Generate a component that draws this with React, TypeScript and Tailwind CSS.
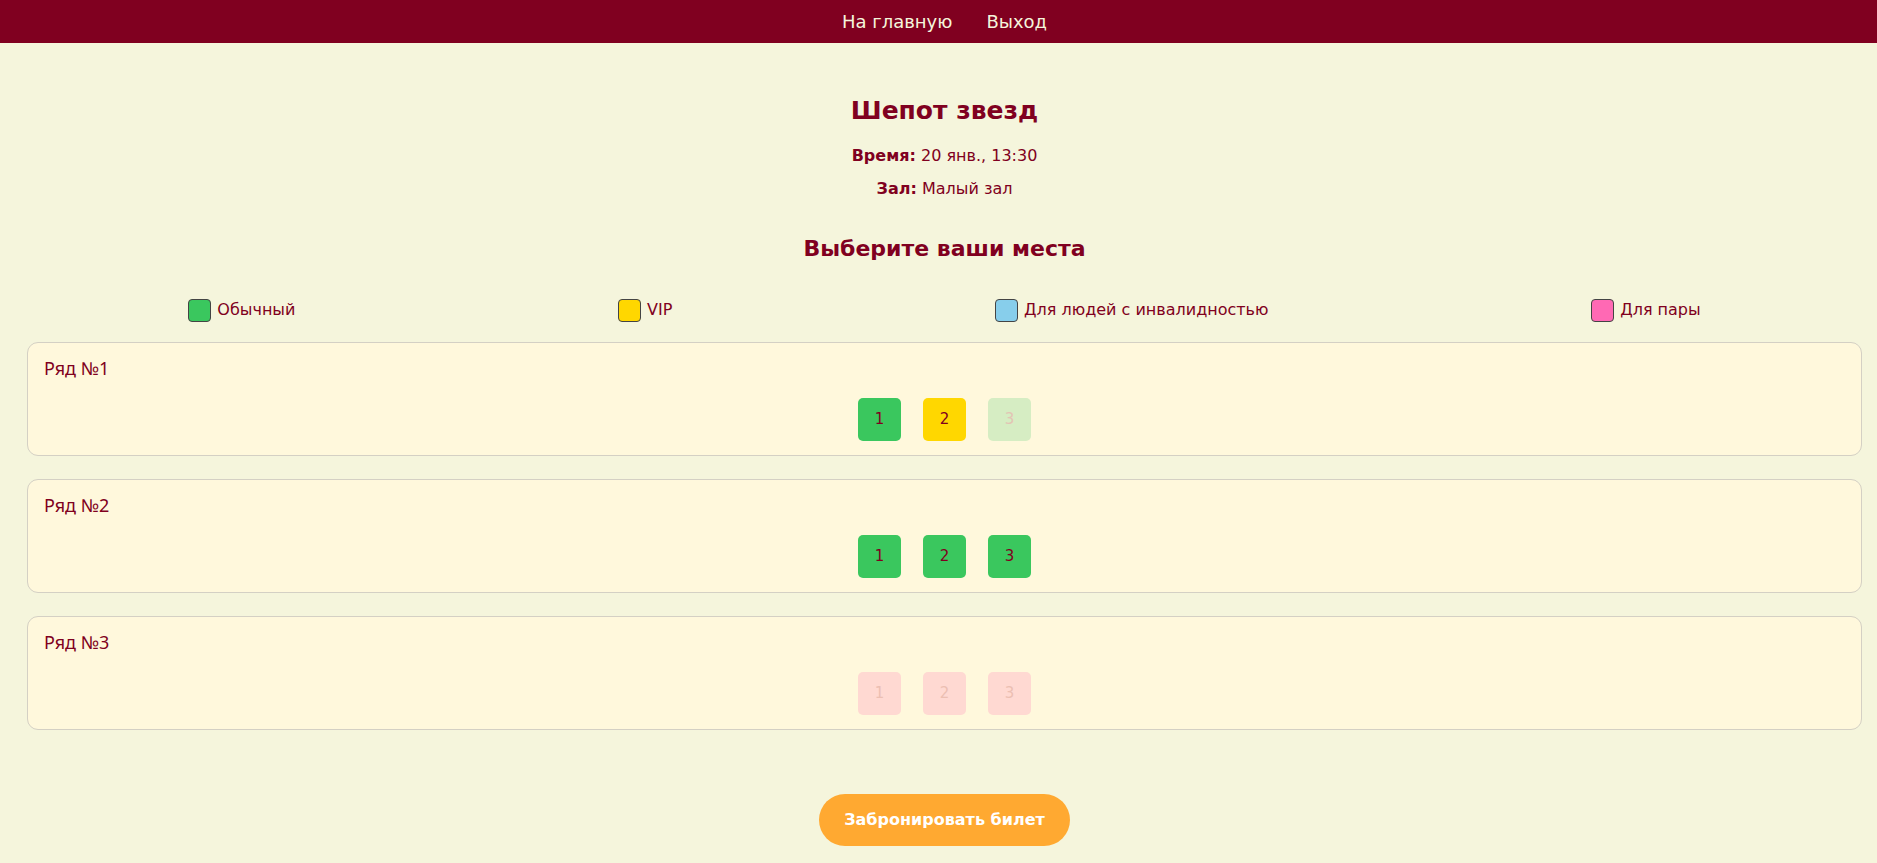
import React from "react";

const legend = [
  { label: "Обычный", color: "bg-[#3ac75e]" },
  { label: "VIP", color: "bg-[#ffd700]" },
  { label: "Для людей с инвалидностью", color: "bg-[#87ceeb]" },
  { label: "Для пары", color: "bg-[#ff69b4]" },
];

type Seat = { n: number; kind: "green" | "vip" | "taken-green" | "taken" };

const rows: { title: string; seats: Seat[] }[] = [
  {
    title: "Ряд №1",
    seats: [
      { n: 1, kind: "green" },
      { n: 2, kind: "vip" },
      { n: 3, kind: "taken-green" },
    ],
  },
  {
    title: "Ряд №2",
    seats: [
      { n: 1, kind: "green" },
      { n: 2, kind: "green" },
      { n: 3, kind: "green" },
    ],
  },
  {
    title: "Ряд №3",
    seats: [
      { n: 1, kind: "taken" },
      { n: 2, kind: "taken" },
      { n: 3, kind: "taken" },
    ],
  },
];

const seatClass: Record<Seat["kind"], string> = {
  green: "bg-[#3ac75e] text-[#800020]",
  vip: "bg-[#ffd700] text-[#800020]",
  "taken-green": "bg-[#d6edc3] text-[#e3c4b4]",
  taken: "bg-[#ffd9d2] text-[#ecbfb2]",
};

export default function App() {
  return (
    <div className="min-h-screen bg-[#f5f5dc] text-[#800020] font-['Comic_Sans_MS','DejaVu_Sans',sans-serif]">
      <nav className="h-[43px] bg-[#800020] flex items-center justify-center gap-[34px] pl-[27px] pr-[15px] text-[18px] text-[#f5f5dc]">
        <a href="#">На главную</a>
        <a href="#">Выход</a>
      </nav>

      <main className="pl-[27px] pr-[15px] pb-4">
        <div className="flex flex-col items-center">
          <h1 className="mt-[51px] text-[25px] leading-[34px] font-bold">Шепот звезд</h1>
          <p className="mt-[16px] text-[16px] leading-[24px]">
            <b>Время:</b> 20 янв., 13:30
          </p>
          <p className="mt-[9px] text-[16px] leading-[24px]">
            <b>Зал:</b> Малый зал
          </p>
          <h2 className="mt-[32px] text-[22px] leading-[32px] font-bold">Выберите ваши места</h2>
        </div>

        <div className="mt-[33px] flex justify-around items-center text-[16px]">
          {legend.map((item) => (
            <div key={item.label} className="flex items-center gap-[6px]">
              <span className={`w-[23px] h-[23px] rounded-[4px] border border-[#444] ${item.color}`} />
              <span>{item.label}</span>
            </div>
          ))}
        </div>

        <div className="mt-[20px] flex flex-col gap-[23px]">
          {rows.map((row) => (
            <div
              key={row.title}
              className="h-[114px] rounded-[11px] border border-[#d4d0c4] bg-[#fff8dc] px-4 pt-[13px] pb-4 flex flex-col"
            >
              <div className="text-[18px] leading-[24px] font-['Noto_Sans',sans-serif]">{row.title}</div>
              <div className="mt-[18px] flex justify-center gap-[22px]">
                {row.seats.map((s) => (
                  <div
                    key={s.n}
                    className={`w-[43px] h-[43px] rounded-[5px] flex items-center justify-center text-[15px] ${seatClass[s.kind]}`}
                  >
                    {s.n}
                  </div>
                ))}
              </div>
            </div>
          ))}
        </div>

        <div className="mt-[64px] flex justify-center">
          <button className="h-[52px] w-[251px] rounded-full bg-[#ffa931] text-white text-[16px] font-bold">
            Забронировать билет
          </button>
        </div>
      </main>
    </div>
  );
}
